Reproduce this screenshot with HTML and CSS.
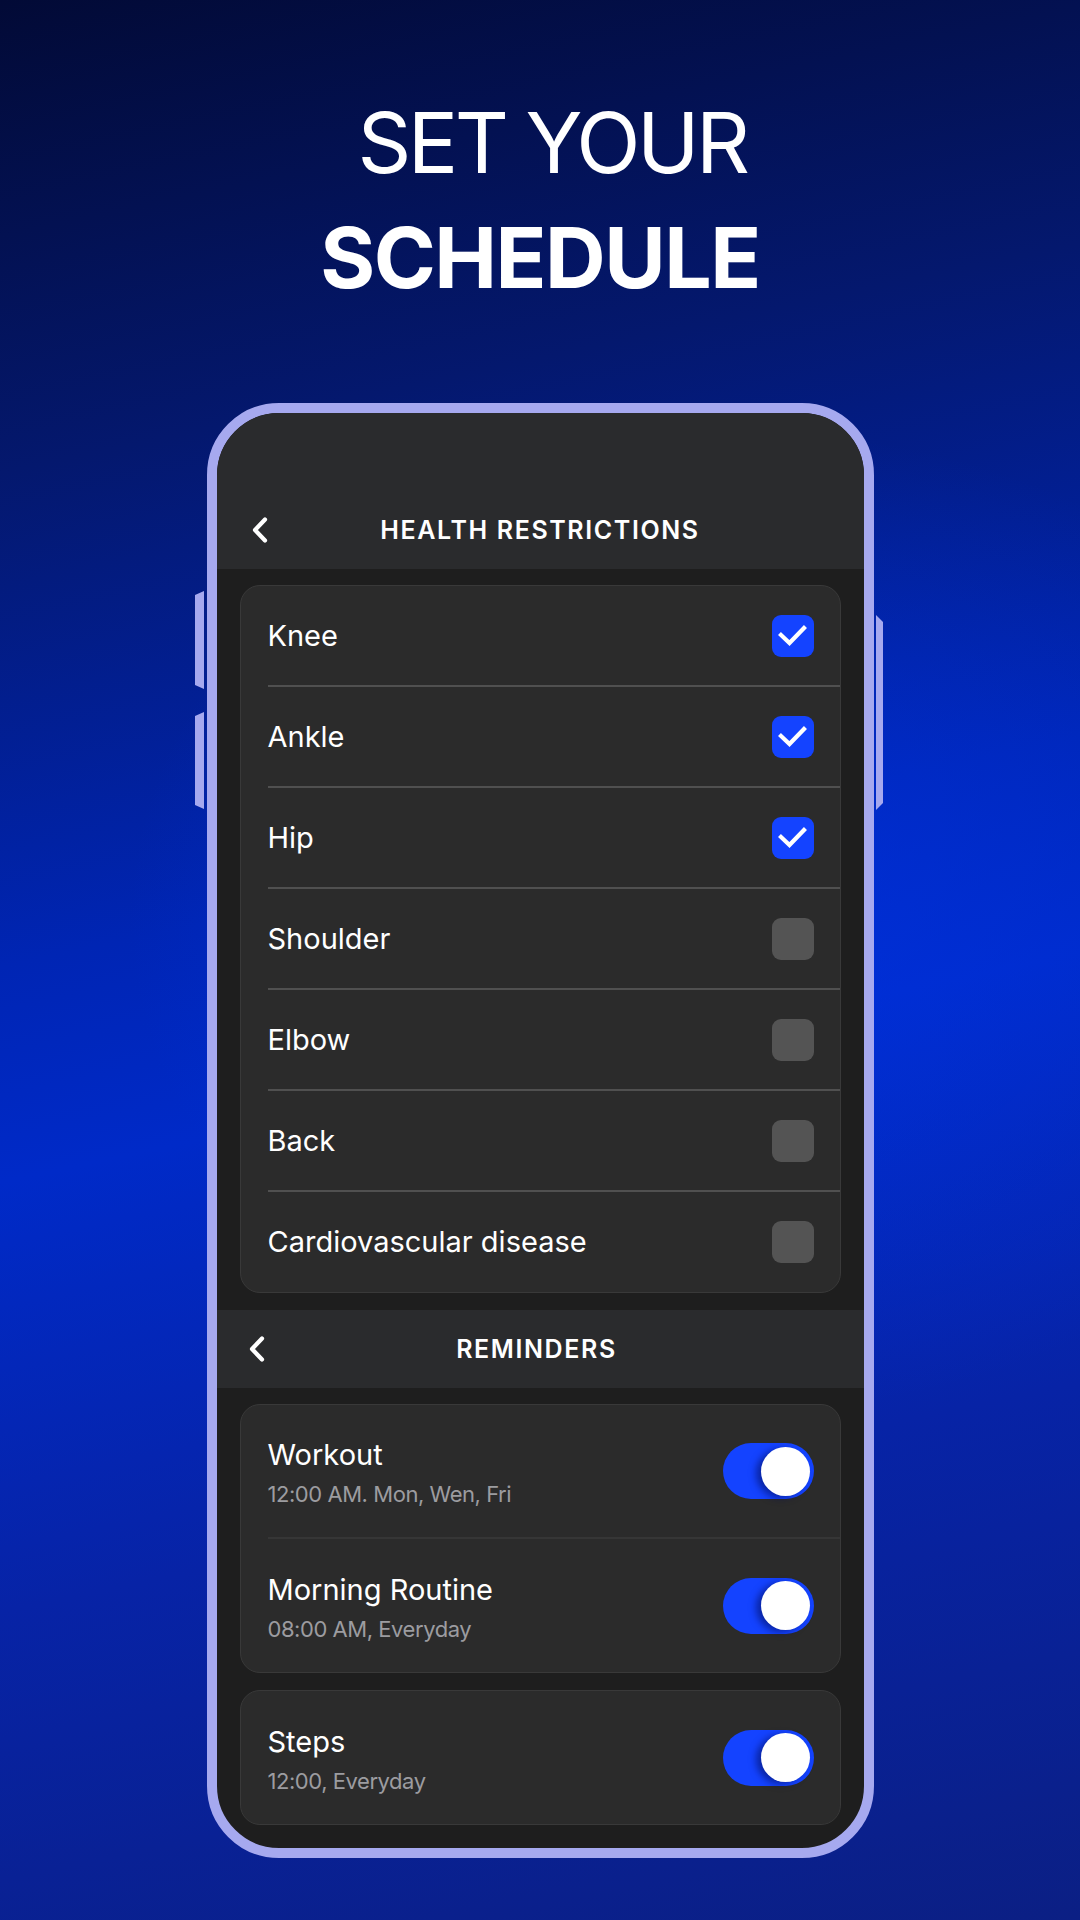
FILE: index.html
```html
<!DOCTYPE html>
<html lang="en">
<head>
<meta charset="utf-8">
<title>Set your schedule</title>
<link rel="stylesheet" href="styles.css">
</head>
<body>
<div class="page">
  <h1 class="headline"><span class="light">SET YOUR</span><span class="bold">SCHEDULE</span></h1>
  <div class="device">
    <span class="side side-l1"></span>
    <span class="side side-l2"></span>
    <span class="side side-r"></span>
    <div class="phone">
      <div class="status"></div>
      <div class="nav">
        <svg class="chev" width="20" height="28" viewBox="0 0 20 28"><path d="M15 3.5 L5 14 L15 24.5" fill="none" stroke="#fff" stroke-width="4.2" stroke-linecap="round" stroke-linejoin="round"/></svg>
        <div class="nav-title">HEALTH RESTRICTIONS</div>
      </div>
      <div class="section">
        <div class="card">
          <div class="row"><span class="label">Knee</span><span class="check on"><svg width="42" height="42" viewBox="0 0 42 42"><path d="M9 20 L17.5 28 L32 13" fill="none" stroke="#fff" stroke-width="4.2" stroke-linecap="square" stroke-linejoin="miter"/></svg></span></div>
          <div class="row"><span class="label">Ankle</span><span class="check on"><svg width="42" height="42" viewBox="0 0 42 42"><path d="M9 20 L17.5 28 L32 13" fill="none" stroke="#fff" stroke-width="4.2" stroke-linecap="square" stroke-linejoin="miter"/></svg></span></div>
          <div class="row"><span class="label">Hip</span><span class="check on"><svg width="42" height="42" viewBox="0 0 42 42"><path d="M9 20 L17.5 28 L32 13" fill="none" stroke="#fff" stroke-width="4.2" stroke-linecap="square" stroke-linejoin="miter"/></svg></span></div>
          <div class="row"><span class="label">Shoulder</span><span class="check"></span></div>
          <div class="row"><span class="label">Elbow</span><span class="check"></span></div>
          <div class="row"><span class="label">Back</span><span class="check"></span></div>
          <div class="row"><span class="label">Cardiovascular disease</span><span class="check"></span></div>
        </div>
      </div>
      <div class="nav">
        <svg class="chev chev-2" width="20" height="28" viewBox="0 0 20 28"><path d="M15 3.5 L5 14 L15 24.5" fill="none" stroke="#fff" stroke-width="4.2" stroke-linecap="round" stroke-linejoin="round"/></svg>
        <div class="nav-title nav-title-2">REMINDERS</div>
      </div>
      <div class="section section-last">
        <div class="card">
          <div class="rrow">
            <div class="rtext"><div class="rtitle">Workout</div><div class="rsub">12:00 AM. Mon, Wen, Fri</div></div>
            <span class="toggle"><span class="knob"></span></span>
          </div>
          <div class="rrow">
            <div class="rtext"><div class="rtitle">Morning Routine</div><div class="rsub">08:00 AM, Everyday</div></div>
            <span class="toggle"><span class="knob"></span></span>
          </div>
        </div>
        <div class="card">
          <div class="rrow">
            <div class="rtext"><div class="rtitle">Steps</div><div class="rsub">12:00, Everyday</div></div>
            <span class="toggle"><span class="knob"></span></span>
          </div>
        </div>
      </div>
    </div>
  </div>
</div>
</body>
</html>
```
FILE: styles.css
```css
* { box-sizing: border-box; }
html, body { margin: 0; padding: 0; }
body {
  width: 1080px;
  height: 1920px;
  overflow: hidden;
  font-family: Inter, "Noto Sans", "Liberation Sans", sans-serif;
  color: #fff;
  background:
    radial-gradient(ellipse 900px 700px at 70% 48%, rgba(0, 52, 230, 0.55), rgba(0, 52, 230, 0) 70%),
    linear-gradient(168deg, #020a36 0%, #04186e 22%, #0025b4 45%, #002ac8 55%, #0723a6 75%, #0b1f84 100%);
}
.page {
  padding-top: 85px;
}
.headline {
  margin: 0;
  display: flex;
  flex-direction: column;
  align-items: center;
  font-size: 84px;
  line-height: 115px;
}
.light {
  font-weight: 400;
  letter-spacing: -3.5px;
  padding-left: 24px;
}
.bold {
  font-weight: 700;
  letter-spacing: -1.5px;
}
.device {
  position: relative;
  width: 667px;
  height: 1455px;
  margin: 88px auto 0;
}
.side {
  position: absolute;
  background: #a6a9ef;
}
.side-l1 {
  left: -11.5px;
  top: 188px;
  width: 9px;
  height: 98px;
  clip-path: polygon(0 4px, 100% 0, 100% 100%, 0 calc(100% - 4px));
}
.side-l2 {
  left: -11.5px;
  top: 309px;
  width: 9px;
  height: 97px;
  clip-path: polygon(0 4px, 100% 0, 100% 100%, 0 calc(100% - 4px));
}
.side-r {
  left: 669.5px;
  top: 212px;
  width: 7px;
  height: 195px;
  clip-path: polygon(0 0, 100% 7px, 100% calc(100% - 7px), 0 100%);
}
.phone {
  width: 100%;
  height: 100%;
  border: 10.5px solid #a6a9ef;
  border-radius: 72px;
  background: #1e1e1e;
  overflow: hidden;
  display: flex;
  flex-direction: column;
}
.status {
  height: 78px;
  flex: none;
  background: #2a2b2d;
}
.nav {
  height: 78px;
  flex: none;
  background: #2a2b2d;
  display: grid;
  grid-template-columns: 1fr auto 1fr;
  align-items: center;
}
.chev {
  justify-self: start;
  margin-left: 33px;
  display: block;
}
.chev-2 {
  margin-left: 30px;
}
.nav-title {
  font-size: 25px;
  font-weight: 600;
  letter-spacing: 1.6px;
  line-height: 30px;
}
.nav-title-2 {
  margin-left: -7px;
}
.section {
  padding: 16px 23px 17px;
  display: flex;
  flex-direction: column;
  gap: 17px;
}
.section-last {
  padding-bottom: 0;
}
.card {
  background: #2b2b2b;
  border: 1px solid #393939;
  border-radius: 20px;
}
.row {
  height: 101px;
  margin-left: 27px;
  padding-right: 26px;
  display: flex;
  align-items: center;
  justify-content: space-between;
  border-bottom: 2px solid #505050;
}
.row:last-child {
  border-bottom: none;
  height: 100px;
}
.label {
  font-size: 29px;
  line-height: 36px;
}
.check {
  width: 42px;
  height: 42px;
  border-radius: 9px;
  background: #545454;
  display: block;
}
.check svg { display: block; }
.check.on {
  background: #1443ff;
}
.rrow {
  height: 134px;
  margin-left: 27px;
  padding-right: 26px;
  display: flex;
  align-items: center;
  justify-content: space-between;
  border-bottom: 2px solid #363636;
}
.rrow:last-child {
  border-bottom: none;
  height: 133px;
}
.rtext {
  display: flex;
  flex-direction: column;
  padding-top: 3px;
}
.rtitle {
  font-size: 29px;
  line-height: 36px;
}
.rsub {
  margin-top: 7px;
  font-size: 22px;
  line-height: 28px;
  letter-spacing: -0.45px;
  color: #9c9ca0;
}
.toggle {
  width: 91px;
  height: 56px;
  border-radius: 28px;
  background: #1443ff;
  display: flex;
  align-items: center;
  justify-content: flex-end;
  padding-right: 3.5px;
}
.knob {
  width: 49px;
  height: 49px;
  border-radius: 50%;
  background: #fff;
  box-shadow: -5px 2px 7px rgba(0, 12, 90, 0.55);
}
```
